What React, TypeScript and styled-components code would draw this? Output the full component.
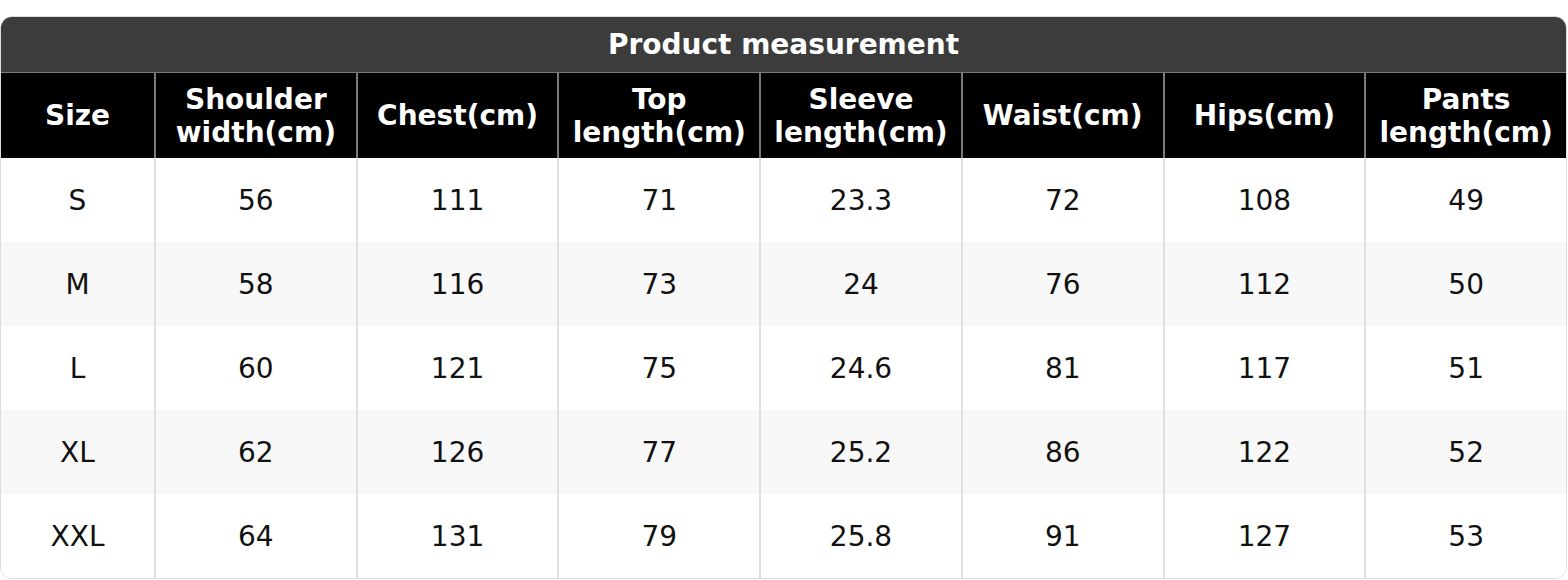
import React from "react";
import styled, { createGlobalStyle } from "styled-components";

const GlobalStyle = createGlobalStyle`
  html, body {
    margin: 0;
    padding: 0;
    background: #ffffff;
  }
  body {
    font-family: "DejaVu Sans", "Liberation Sans", sans-serif;
  }
`;

const Page = styled.div`
  padding-top: 16px;
  width: 1568px;
`;

const Card = styled.div`
  box-sizing: border-box;
  width: 1567px;
  border: 1px solid #dcdcdc;
  border-radius: 12px;
  overflow: hidden;
  background: #fff;
`;

const Title = styled.div`
  height: 55px;
  background: #3c3c3c;
  color: #fff;
  font-weight: bold;
  font-size: 28px;
  display: flex;
  align-items: center;
  justify-content: center;
  border-bottom: 1px solid #7a7a7a;
`;

const Grid = styled.div`
  display: grid;
  grid-template-columns: 153px repeat(7, 1fr);
`;

const HeadCell = styled.div<{ $first?: boolean }>`
  height: 85px;
  background: #000;
  color: #fff;
  font-weight: bold;
  font-size: 28px;
  line-height: 33px;
  text-align: center;
  display: flex;
  align-items: center;
  justify-content: center;
  border-left: ${(p) => (p.$first ? "none" : "2px solid #7a7a7a")};
`;

const Cell = styled.div<{ $first?: boolean; $alt?: boolean }>`
  height: 84px;
  background: ${(p) => (p.$alt ? "#f8f8f8" : "#fff")};
  color: #111;
  font-size: 28px;
  display: flex;
  align-items: center;
  justify-content: center;
  border-left: ${(p) => (p.$first ? "none" : "2px solid #e0e0e0")};
`;

const headers = [
  ["Size"],
  ["Shoulder", "width(cm)"],
  ["Chest(cm)"],
  ["Top", "length(cm)"],
  ["Sleeve", "length(cm)"],
  ["Waist(cm)"],
  ["Hips(cm)"],
  ["Pants", "length(cm)"],
];

const rows = [
  ["S", "56", "111", "71", "23.3", "72", "108", "49"],
  ["M", "58", "116", "73", "24", "76", "112", "50"],
  ["L", "60", "121", "75", "24.6", "81", "117", "51"],
  ["XL", "62", "126", "77", "25.2", "86", "122", "52"],
  ["XXL", "64", "131", "79", "25.8", "91", "127", "53"],
];

const App = () => {
  return (
    <Page>
      <GlobalStyle />
      <Card>
        <Title>Product measurement</Title>
        <Grid>
          {headers.map((h, i) => (
            <HeadCell key={i} $first={i === 0}>
              <div>
                {h.map((line, j) => (
                  <div key={j}>{line}</div>
                ))}
              </div>
            </HeadCell>
          ))}
          {rows.map((r, ri) =>
            r.map((v, ci) => (
              <Cell key={ri + "-" + ci} $first={ci === 0} $alt={ri % 2 === 1}>
                {v}
              </Cell>
            ))
          )}
        </Grid>
      </Card>
    </Page>
  );
};

export default App;
